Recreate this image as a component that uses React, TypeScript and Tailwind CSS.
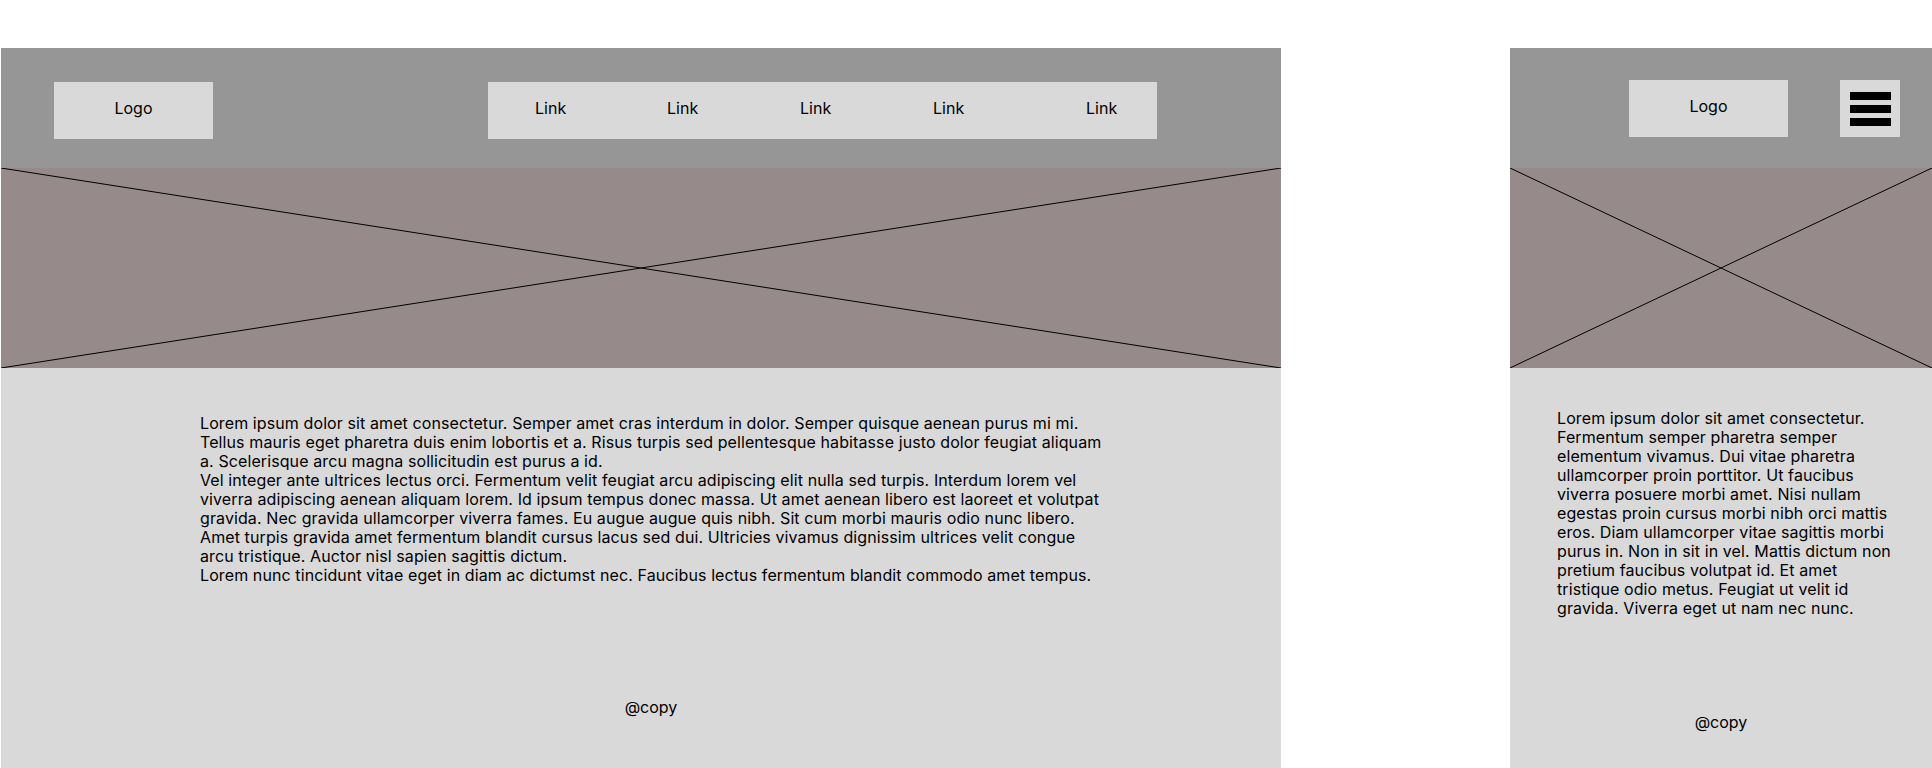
import React from 'react';

const desktopParagraphs = [
  'Lorem ipsum dolor sit amet consectetur. Semper amet cras interdum in dolor. Semper quisque aenean purus mi mi. Tellus mauris eget pharetra duis enim lobortis et a. Risus turpis sed pellentesque habitasse justo dolor feugiat aliquam a. Scelerisque arcu magna sollicitudin est purus a id.',
  'Vel integer ante ultrices lectus orci. Fermentum velit feugiat arcu adipiscing elit nulla sed turpis. Interdum lorem vel viverra adipiscing aenean aliquam lorem. Id ipsum tempus donec massa. Ut amet aenean libero est laoreet et volutpat gravida. Nec gravida ullamcorper viverra fames. Eu augue augue quis nibh. Sit cum morbi mauris odio nunc libero. Amet turpis gravida amet fermentum blandit cursus lacus sed dui. Ultricies vivamus dignissim ultrices velit congue arcu tristique. Auctor nisl sapien sagittis dictum.',
  'Lorem nunc tincidunt vitae eget in diam ac dictumst nec. Faucibus lectus fermentum blandit commodo amet tempus.',
];

const mobileText =
  'Lorem ipsum dolor sit amet consectetur. Fermentum semper pharetra semper elementum vivamus. Dui vitae pharetra ullamcorper proin porttitor. Ut faucibus viverra posuere morbi amet. Nisi nullam egestas proin cursus morbi nibh orci mattis eros. Diam ullamcorper vitae sagittis morbi purus in. Non in sit in vel. Mattis dictum non pretium faucibus volutpat id. Et amet tristique odio metus. Feugiat ut velit id gravida. Viverra eget ut nam nec nunc.';

// placeholder image: grey box crossed corner to corner
function HeroPlaceholder() {
  return (
    <div className="relative h-[200px] w-full shrink-0 bg-[#968a8a]">
      <svg className="absolute inset-0 h-full w-full" viewBox="0 0 100 100" preserveAspectRatio="none">
        <line x1="0" y1="0" x2="100" y2="100" stroke="#000" strokeWidth="1" vectorEffect="non-scaling-stroke" />
        <line x1="100" y1="0" x2="0" y2="100" stroke="#000" strokeWidth="1" vectorEffect="non-scaling-stroke" />
      </svg>
    </div>
  );
}

function DesktopFrame() {
  return (
    <div className="flex h-[720px] w-[1280px] shrink-0 flex-col bg-[#d9d9d9]">
      {/* Header */}
      <div className="flex h-[120px] shrink-0 items-start bg-[#969696] pl-[53px] pt-[34px]">
        <div className="flex h-[57px] w-[159px] items-center justify-center bg-[#d9d9d9] pb-[4px]">Logo</div>
        <div className="ml-[275px] grid h-[57px] w-[669px] grid-cols-[132px_133px_133px_153px_auto] items-center bg-[#d9d9d9] pb-[4px] pl-[47px]">
          <span>Link</span>
          <span>Link</span>
          <span>Link</span>
          <span>Link</span>
          <span>Link</span>
        </div>
      </div>

      <HeroPlaceholder />

      {/* Body */}
      <div className="ml-[199px] flex w-[902px] flex-col pt-[46px]">
        <div className="tracking-[0.1px]">
          {desktopParagraphs.map((p, i) => (
            <p key={i}>{p}</p>
          ))}
        </div>
        <p className="mt-[113px] text-center">@copy</p>
      </div>
    </div>
  );
}

function MobileFrame() {
  return (
    <div className="flex h-[720px] w-[422px] shrink-0 flex-col bg-[#d9d9d9]">
      <div className="flex h-[120px] shrink-0 items-start justify-end gap-[52px] bg-[#969696] pr-[32px] pt-[32px]">
        <div className="flex h-[57px] w-[159px] items-center justify-center bg-[#d9d9d9] pb-[4px]">Logo</div>
        <div className="flex h-[57px] w-[60px] flex-col items-center justify-center gap-[5px] bg-[#d9d9d9]">
          <div className="h-[8px] w-[41px] bg-black" />
          <div className="h-[8px] w-[41px] bg-black" />
          <div className="h-[8px] w-[41px] bg-black" />
        </div>
      </div>

      <HeroPlaceholder />

      <div className="flex flex-col pl-[47px] pt-[41px]">
        <p className="w-[334px] tracking-[0.1px]">{mobileText}</p>
        <p className="mt-[95px] w-[328px] text-center">@copy</p>
      </div>
    </div>
  );
}

export default function App() {
  return (
    <div className="h-[768px] w-[1932px] overflow-hidden bg-white font-['Inter',sans-serif] text-[16px] leading-[19px] text-black">
      <div className="mt-[48px] flex pl-[1px]">
        <DesktopFrame />
        <div className="w-[229px] shrink-0" />
        <MobileFrame />
      </div>
    </div>
  );
}
